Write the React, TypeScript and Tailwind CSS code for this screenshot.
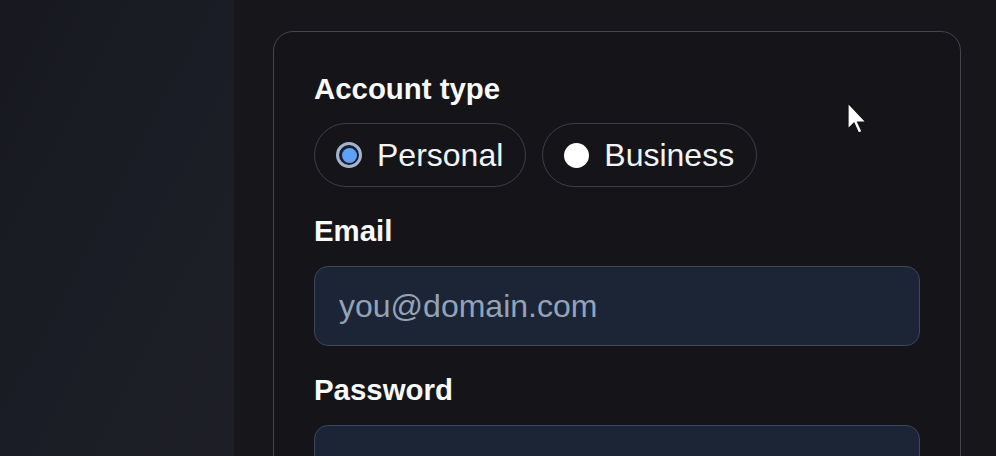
import { useState } from "react";

type AccountType = "personal" | "business";

export default function App() {
  const [accountType, setAccountType] = useState<AccountType>("personal");

  return (
    <div
      className="relative flex h-[456px] w-full overflow-hidden bg-[#16161b] text-slate-100"
      style={{ fontFamily: '"Liberation Sans", Arial, sans-serif' }}
    >
      <aside className="w-[234px] shrink-0 bg-gradient-to-br from-[#17181f] via-[#1b1d26] to-[#1e1f26]" />

      <main className="flex-1 pl-[39px] pr-[35px] pt-[31px]">
        <form className="rounded-[20px] border border-[#44464e] bg-[#151519] px-10 pb-10 pt-10">
          <fieldset>
            <legend className="mb-[18px] text-[29.4px] font-bold leading-[33px] text-slate-50">Account type</legend>
            <div className="flex gap-4">
              <RadioPill label="Personal" checked={accountType === "personal"} onSelect={() => setAccountType("personal")} />
              <RadioPill label="Business" checked={accountType === "business"} onSelect={() => setAccountType("business")} />
            </div>
          </fieldset>

          <Field label="Email" placeholder="you@domain.com" type="email" />
          <Field label="Password" placeholder="" type="password" />
        </form>
      </main>

      <svg className="pointer-events-none absolute left-[846px] top-[102px]" width="24" height="36" viewBox="0 0 24 36">
        <path d="M2 1 L2 27 L8 21 L12.5 31 L16 29.5 L11.6 20 L20 20 Z" fill="#ffffff" stroke="#111" strokeWidth="1.2" />
      </svg>
    </div>
  );
}

function RadioPill({ label, checked, onSelect }: { label: string; checked: boolean; onSelect: () => void }) {
  return (
    <label className="flex h-16 cursor-pointer items-center gap-[15px] rounded-full border border-[#3b3f49] pl-[21px] pr-[22px]">
      <input type="radio" name="accountType" className="sr-only" checked={checked} onChange={onSelect} />
      {checked ? (
        <span className="flex h-[26px] w-[26px] items-center justify-center rounded-full border-[3px] border-[#a3b4d0] bg-[#1a1f2a]">
          <span className="h-[15px] w-[15px] rounded-full bg-[#5ea1f8]" />
        </span>
      ) : (
        <span className="h-[25px] w-[25px] rounded-full bg-white" />
      )}
      <span className="text-[32px] leading-[37px] text-slate-100">{label}</span>
    </label>
  );
}

function Field({ label, placeholder, type }: { label: string; placeholder: string; type: string }) {
  return (
    <div className="mt-[27px]">
      <label className="mb-[19px] block text-[29.4px] font-bold leading-[33px] text-slate-50">{label}</label>
      <input
        type={type}
        placeholder={placeholder}
        className="h-20 w-full rounded-[14px] border border-[#3b475a] bg-[#1b2535] px-6 text-[32px] text-slate-100 outline-none placeholder:text-[#94a3b8]"
      />
    </div>
  );
}
